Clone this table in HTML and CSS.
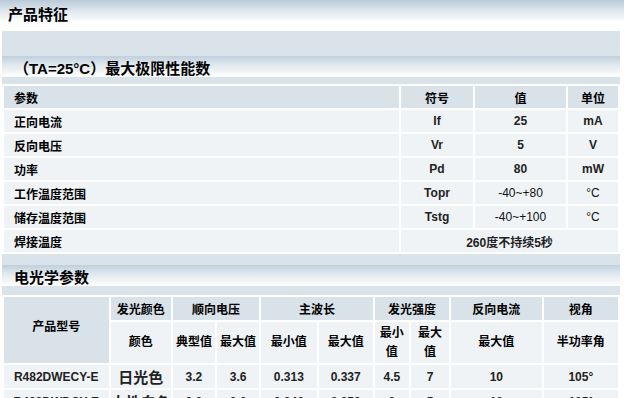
FILE: index.html
```html
<!DOCTYPE html>
<html>
<head>
<meta charset="utf-8">
<link rel="stylesheet" href="styles.css">
</head>
<body>
<div class="page-title">产品特征</div>
<div class="panel">
  <div class="spacer-top"></div>
  <div class="sec-title">（TA=25°C）最大极限性能数</div>
  <div class="spacer-a"></div>
  <table class="t1">
    <colgroup><col class="c1"><col class="c2"><col class="c3"><col class="c4"></colgroup>
    <tr class="head"><td class="name">参数</td><td>符号</td><td>值</td><td>单位</td></tr>
    <tr><td class="name">正向电流</td><td>If</td><td>25</td><td>mA</td></tr>
    <tr><td class="name">反向电压</td><td>Vr</td><td>5</td><td>V</td></tr>
    <tr><td class="name">功率</td><td>Pd</td><td>80</td><td>mW</td></tr>
    <tr><td class="name">工作温度范围</td><td>Topr</td><td class="thin">-40~+80</td><td class="thin">°C</td></tr>
    <tr><td class="name">储存温度范围</td><td>Tstg</td><td class="thin">-40~+100</td><td class="thin">°C</td></tr>
    <tr><td class="name">焊接温度</td><td colspan="3">260度不持续5秒</td></tr>
  </table>
  <div class="spacer-b"></div>
  <div class="sec-title">电光学参数</div>
  <div class="spacer-c"></div>
  <table class="t2">
    <colgroup>
      <col class="w104"><col class="w60"><col class="w42"><col class="w42"><col class="w55"><col class="w54"><col class="w34"><col class="w38"><col class="w90"><col class="w76">
    </colgroup>
    <tr class="h1"><td rowspan="2" class="model-h">产品型号</td><td>发光颜色</td><td colspan="2">顺向电压</td><td colspan="2">主波长</td><td colspan="2">发光强度</td><td>反向电流</td><td>视角</td></tr>
    <tr class="h2"><td>颜色</td><td>典型值</td><td>最大值</td><td>最小值</td><td>最大值</td><td>最小<br>值</td><td>最大<br>值</td><td>最大值</td><td>半功率角</td></tr>
    <tr class="row"><td>R482DWECY-E</td><td class="color">日光色</td><td>3.2</td><td>3.6</td><td>0.313</td><td>0.337</td><td>4.5</td><td>7</td><td>10</td><td>105°</td></tr>
    <tr class="row"><td>R482DWDCY-E</td><td class="color">中性白色</td><td>3.2</td><td>3.6</td><td>0.346</td><td>0.359</td><td>3</td><td>5</td><td>10</td><td>105°</td></tr>
  </table>
</div>
</body>
</html>
```
FILE: styles.css
```css
html, body {
  margin: 0;
  padding: 0;
  background: #ffffff;
}
body {
  font-family: "Liberation Sans", Arial, "Noto Sans CJK SC", sans-serif;
  font-size: 12px;
  color: #000;
  width: 624px;
  height: 398px;
  overflow: hidden;
}
.page-title {
  height: 30px;
  line-height: 28px;
  padding-left: 8px;
  font-size: 15px;
  font-weight: bold;
  font-family: "Noto Sans CJK SC", sans-serif;
  background: linear-gradient(to bottom, #b9cad7 0%, #dde6ed 35%, #ffffff 75%, #ffffff 100%);
  margin-bottom: 1px;
}
.panel {
  margin-left: 2px;
  width: 618px;
  background: #dae3ea;
}
.spacer-top { height: 25px; }
.spacer-a { height: 7px; }
.spacer-b { height: 11px; }
.spacer-c { height: 9px; }
.sec-title {
  height: 21px;
  line-height: 26px;
  padding-left: 12px;
  font-size: 15px;
  font-weight: bold;
  font-family: "Liberation Sans", Arial, "Noto Sans CJK SC", sans-serif;
  background: linear-gradient(to bottom, #bfcfdc 0%, #dce5ec 35%, #ffffff 100%);
  overflow: hidden;
}
table {
  width: 618px;
  border-collapse: separate;
  border-spacing: 2px;
  background: #ffffff;
  table-layout: fixed;
}
td {
  padding: 0;
  text-align: center;
  font-weight: bold;
  font-family: "Liberation Sans", Arial, "Noto Sans CJK SC", sans-serif;
  font-size: 12px;
}
.t1 td {
  height: 22px;
  background: #eff3f6;
  color: #222;
}
.t1 tr.head td {
  background: #d9e2e9;
  color: #000;
}
.t1 td.name {
  text-align: left;
  padding-left: 10px;
  color: #000;
}
.t1 td.thin {
  font-weight: normal;
  color: #111;
}
.c1 { width: 395px; }
.c2 { width: 72px; }
.c3 { width: 91px; }
.c4 { width: 50px; }
.t2 tr.h1 td {
  height: 23px;
  background: #d9e2e9;
}
.t2 tr.h2 td {
  height: 41px;
  background: #eff3f6;
  line-height: 19px;
}
.t2 td.model-h {
  background: #d9e2e9;
  vertical-align: middle;
  padding-bottom: 10px;
}
.t2 tr.row td {
  height: 23px;
  background: #eff3f6;
  color: #222;
}
.t2 td.color {
  font-size: 15px;
  color: #000;
}
.w104 { width: 104px; }
.w60 { width: 60px; }
.w42 { width: 42px; }
.w55 { width: 55px; }
.w54 { width: 54px; }
.w34 { width: 34px; }
.w38 { width: 38px; }
.w90 { width: 90px; }
.w76 { width: 74px; }
```
